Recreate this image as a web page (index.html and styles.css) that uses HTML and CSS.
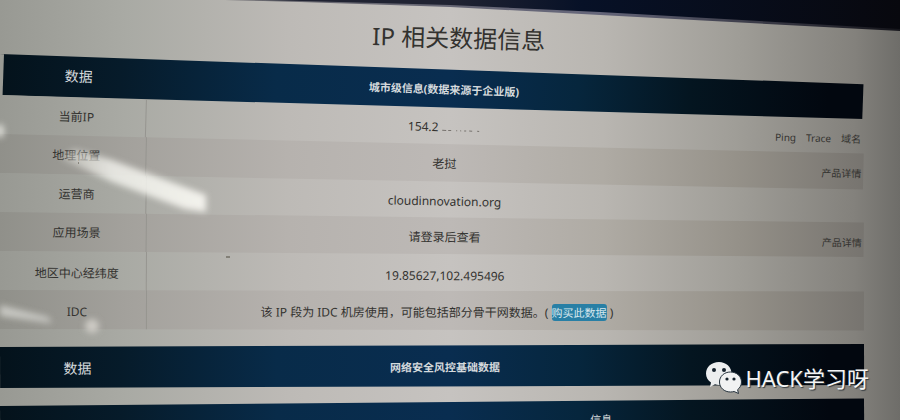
FILE: index.html
```html
<!DOCTYPE html>
<html lang="zh-CN">
<head>
<meta charset="utf-8">
<title>IP 相关数据信息</title>
<link rel="stylesheet" href="styles.css">
</head>
<body>
<svg class="bezel" viewBox="0 0 900 32" preserveAspectRatio="none" aria-hidden="true">
  <defs>
    <linearGradient id="edge" x1="0" x2="1"><stop offset="0" stop-color="#67666b"/><stop offset=".55" stop-color="#65667a"/><stop offset="1" stop-color="#15151b"/></linearGradient>
    <linearGradient id="frame" x1="0" x2="1"><stop offset=".3" stop-color="#202332"/><stop offset=".5" stop-color="#071127"/><stop offset="1" stop-color="#08080e"/></linearGradient>
  </defs>
  <path d="M225 0L300 2L450 7L600 15L900 31V0Z" fill="url(#edge)"/>
  <path d="M265 0L450 5L600 12L900 29V0Z" fill="url(#frame)"/>
</svg>
<main class="screen">
  <h1 class="title">IP 相关数据信息</h1>
  <table class="grid">
    <thead>
      <tr class="tilt-a"><th class="name">数据</th><th class="value">城市级信息(数据来源于企业版)</th><th class="more"></th></tr>
    </thead>
    <tbody>
      <tr class="tilt-b"><th class="name">当前IP</th><td class="value">154.2<svg class="masked" viewBox="0 0 42 12" aria-hidden="true"><path d="M4 8h4M10 8h3M18 8h1M22 8h1M26 8h2M31 8h3M39 8h2" stroke="#77736e" fill="none"/></svg></td><td class="more"><a href="#ping">Ping</a><a href="#trace">Trace</a><a href="#domain">域名</a></td></tr>
      <tr class="tilt-c"><th class="name">地理位置</th><td class="value">老挝</td><td class="more"><a href="#geo">产品详情</a></td></tr>
      <tr class="tilt-d"><th class="name">运营商</th><td class="value">cloudinnovation.org</td><td class="more"></td></tr>
      <tr class="tilt-e"><th class="name">应用场景</th><td class="value">请登录后查看</td><td class="more"><a href="#scene">产品详情</a></td></tr>
      <tr class="tilt-f"><th class="name">地区中心经纬度</th><td class="value">19.85627,102.495496</td><td class="more"></td></tr>
      <tr class="tilt-g"><th class="name">IDC</th><td class="value note">该 IP 段为 IDC 机房使用，可能包括部分骨干网数据。( <a class="buy" href="#buy">购买此数据</a> )</td><td class="more"></td></tr>
    </tbody>
  </table>
  <table class="grid">
    <thead>
      <tr class="tilt-h"><th class="name">数据</th><th class="value">网络安全风控基础数据</th><th class="more"></th></tr>
    </thead>
  </table>
  <table class="grid">
    <thead>
      <tr class="tilt-i"><th class="name"></th><th class="value last">信息</th><th class="more"></th></tr>
    </thead>
  </table>
</main>
<svg class="glare" viewBox="0 0 240 340" aria-hidden="true">
  <defs>
    <filter id="soft" x="-30%" y="-30%" width="160%" height="160%"><feGaussianBlur stdDeviation="3"/></filter>
    <linearGradient id="beam" x1="0" x2="1"><stop offset="0" stop-color="#f4f4ee" stop-opacity=".3"/><stop offset=".35" stop-color="#f4f4ee" stop-opacity=".8"/><stop offset="1" stop-color="#f6f5f0" stop-opacity=".95"/></linearGradient>
  </defs>
  <g filter="url(#soft)">
    <path d="M60 158 L74 149 L112 160 L206 195 L206 212 L185 209 L112 182Z" fill="url(#beam)"/>
    <ellipse cx="0" cy="131" rx="4" ry="7" fill="#efefe9" opacity=".8"/>
    <path d="M0 305 L48 317 L52 323 L0 316Z" fill="#d5d4cf" opacity=".8"/>
    <ellipse cx="92" cy="326" rx="7" ry="7" fill="#cdcbc5"/>
  </g>
  <path d="M226 257h4M78 163h1" stroke="#504c40"/>
</svg>
<div class="mark">
  <svg class="mark-icon" viewBox="0 0 36 32" aria-hidden="true">
    <path d="M13 0C5.500 0 0 5 0 11.500c0 3.800 1.900 7 5 9.100L4 25l5-2.700c1.300.400 2.600.600 4 .600 7 0 12.500-5 12.500-11.400S20 0 13 0Z" fill="#eceeef"/>
    <path d="M24.500 10C18.200 10 13.500 14.300 13.500 20s4.700 10 11 10c1.300 0 2.500-.200 3.600-.500l4.400 2-.900-3.800c2.400-1.900 3.900-4.600 3.900-7.700 0-5.700-4.900-10-11-10Z" fill="#f1f2f2" stroke="#26333d"/>
    <circle cx="8" cy="8" r="2" fill="#17232d"/><circle cx="18" cy="8" r="2" fill="#17232d"/>
    <circle cx="21" cy="17" r="1.600" fill="#17232d"/><circle cx="28" cy="17" r="1.600" fill="#17232d"/>
  </svg>
  <span>HACK学习呀</span>
</div>
</body>
</html>
```
FILE: styles.css
```css
:root {
  --wall: linear-gradient(90deg, #989993 0%, #a9aaa4 14%, #bdbab6 32%, #c6c3c0 50%, #b9b6b1 67%, #9f9d97 82%, #83817c 95%, #6e6d69 100%);
  --wall-dim: linear-gradient(90deg, #90908a 0%, #a3a19c 14%, #b6b2ae 32%, #bdb9b6 50%, #afaba4 67%, #959189 82%, #797671 95%, #6e6d69 100%);
  --navy: linear-gradient(90deg, #04121b 0%, #061b2a 14%, #082b49 32%, #092d50 52%, #06263d 67%, #041520 80%, #02070f 96%);
}

* {
  box-sizing: border-box;
}

body {
  position: relative;
  margin: 0;
  height: 100vh;
  overflow: hidden;
  background: var(--wall);
  color: #33322f;
  font-family: "Noto Sans", "Noto Sans CJK SC", sans-serif;
  font-size: 12px;
  line-height: 16px;
}

.bezel {
  position: absolute;
  top: 0;
  left: 0;
  width: 100%;
  height: 32px;
}

.title {
  margin: 0;
  padding: 22px 0 0 18px;
  font-size: 24px;
  line-height: 32px;
  font-weight: 400;
  text-align: center;
  transform: rotate(1.5deg);
}

.grid,
.grid thead,
.grid tbody {
  display: block;
}

.grid {
  width: 96%;
  margin-bottom: 18px;
}

.grid tr {
  display: grid;
  grid-template-columns: 17fr 69fr 14fr;
  height: 39px;
  background: var(--wall);
  background-size: 100vw 100%;
  transform-origin: left top;
}

.grid tbody tr:nth-child(even) {
  background: var(--wall-dim);
  background-size: 100vw 100%;
}

.grid thead tr {
  height: 41px;
  background: var(--navy);
  color: #d5dadd;
}

.grid th,
.grid td {
  padding: 12px 0 0;
  text-align: center;
  white-space: nowrap;
}

.grid .name {
  padding-left: 8px;
  font-weight: 400;
}

thead .name {
  font-size: 14px;
}

tbody .name {
  border-right: 1px solid #969590;
}

thead .value {
  font-size: 11px;
  font-weight: 700;
}

.grid .tilt-f > *,
.grid .tilt-g > *,
.grid .tilt-h > * {
  padding-top: 14px;
}

.grid .note {
  padding-right: 16px;
}

.grid .last {
  padding-top: 11px;
  padding-left: 312px;
  font-weight: 400;
}

.grid .more {
  padding-right: 2px;
  font-size: 10px;
  text-align: right;
}

.more a {
  margin-left: 10px;
  color: inherit;
  text-decoration: none;
}

.masked {
  width: 42px;
  height: 12px;
  vertical-align: middle;
}

.buy {
  padding: 1px 0;
  border-radius: 3px;
  background: #287fa5;
  color: #d9e8ee;
  font-size: 11px;
  text-decoration: none;
}

/* Each row leans a little less than the one above it. */
.tilt-a { transform: rotate(2deg); }
.tilt-b { transform: rotate(1.6deg); }
.tilt-c { transform: rotate(1.3deg); }
.tilt-d { transform: rotate(1.1deg); }
.tilt-e { transform: rotate(0.7deg); }
.tilt-f { transform: rotate(0.4deg); }
.tilt-g { transform: rotate(0.1deg); }
.tilt-h { transform: rotate(-0.2deg); }
.tilt-i { transform: rotate(-0.5deg); }

.tilt-a .name {
  border-left: 4px solid #999a94;
}

.glare {
  position: absolute;
  top: 0;
  left: 0;
  width: 240px;
  height: 340px;
  pointer-events: none;
}

.mark {
  position: absolute;
  right: 31px;
  bottom: 26px;
  display: flex;
  align-items: center;
  gap: 4px;
  color: #f4f5f5;
  font-size: 22px;
  line-height: 32px;
  text-shadow: 1px 1px 1px #333a3f;
}

.mark-icon {
  width: 36px;
  height: 32px;
}
```
